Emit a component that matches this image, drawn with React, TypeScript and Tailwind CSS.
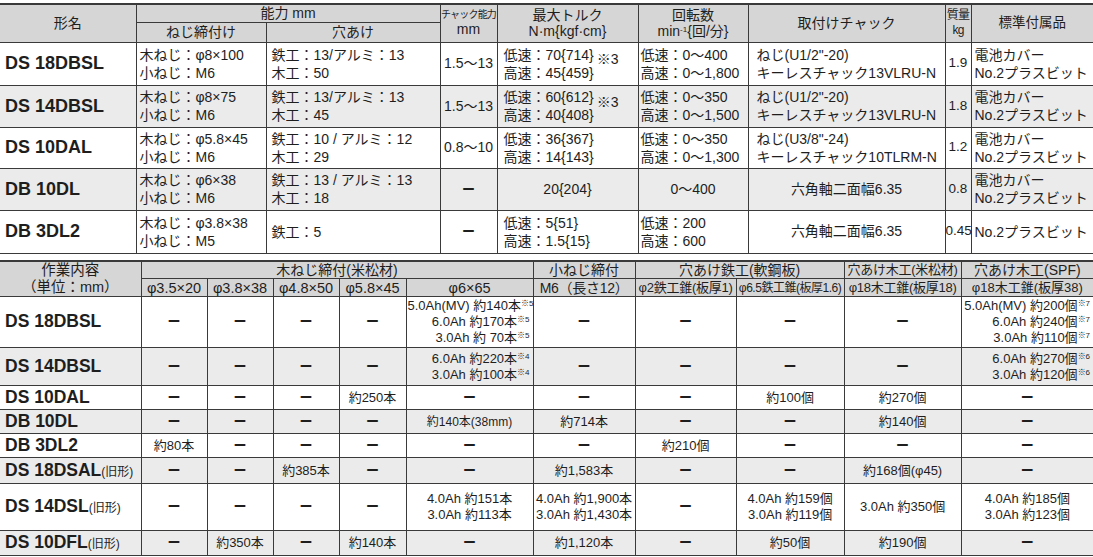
const FONT = "font-['Liberation_Sans','Noto_Sans_CJK_JP',sans-serif]";
const LINE = 'border-l border-b border-[#3a3a3a]';
const HEAD = 'bg-[#d6d6d6] font-normal';
const GRAY = 'bg-[#ebebeb]';

const Dash = () => <span className="font-bold text-[13px]">ー</span>;

type TopRow = {
  name: string;
  screw: string[];
  hole: string[];
  chuck: string;
  torque: string[] | string;
  note?: string;
  rpm: string[] | string;
  mount: string[] | string;
  mass: string;
  acc: string[];
  gray?: boolean;
  h: string;
};

const topRows: TopRow[] = [
  {
    name: 'DS 18DBSL',
    screw: ['木ねじ：φ8×100', '小ねじ：M6'],
    hole: ['鉄工：13/アルミ：13', '木工：50'],
    chuck: '1.5～13',
    torque: ['低速：70{714}', '高速：45{459}'],
    note: '※3',
    rpm: ['低速：0～400', '高速：0～1,800'],
    mount: ['ねじ(U1/2"-20)', 'キーレスチャック13VLRU-N'],
    mass: '1.9',
    acc: ['電池カバー', 'No.2プラスビット'],
    h: 'h-[43px]',
  },
  {
    name: 'DS 14DBSL',
    screw: ['木ねじ：φ8×75', '小ねじ：M6'],
    hole: ['鉄工：13/アルミ：13', '木工：45'],
    chuck: '1.5～13',
    torque: ['低速：60{612}', '高速：40{408}'],
    note: '※3',
    rpm: ['低速：0～350', '高速：0～1,500'],
    mount: ['ねじ(U1/2"-20)', 'キーレスチャック13VLRU-N'],
    mass: '1.8',
    acc: ['電池カバー', 'No.2プラスビット'],
    gray: true,
    h: 'h-[42px]',
  },
  {
    name: 'DS 10DAL',
    screw: ['木ねじ：φ5.8×45', '小ねじ：M6'],
    hole: ['鉄工：10 / アルミ：12', '木工：29'],
    chuck: '0.8～10',
    torque: ['低速：36{367}', '高速：14{143}'],
    rpm: ['低速：0～350', '高速：0～1,300'],
    mount: ['ねじ(U3/8"-24)', 'キーレスチャック10TLRM-N'],
    mass: '1.2',
    acc: ['電池カバー', 'No.2プラスビット'],
    h: 'h-[41px]',
  },
  {
    name: 'DB 10DL',
    screw: ['木ねじ：φ6×38', '小ねじ：M6'],
    hole: ['鉄工：13 / アルミ：13', '木工：18'],
    chuck: '',
    torque: '20{204}',
    rpm: '0～400',
    mount: '六角軸二面幅6.35',
    mass: '0.8',
    acc: ['電池カバー', 'No.2プラスビット'],
    gray: true,
    h: 'h-[42px]',
  },
  {
    name: 'DB 3DL2',
    screw: ['木ねじ：φ3.8×38', '小ねじ：M5'],
    hole: ['鉄工：5'],
    chuck: '',
    torque: ['低速：5{51}', '高速：1.5{15}'],
    rpm: ['低速：200', '高速：600'],
    mount: '六角軸二面幅6.35',
    mass: '0.45',
    acc: ['No.2プラスビット'],
    h: 'h-[43px]',
  },
];

function Lines({ items }: { items: string[] }) {
  return (
    <div className="leading-[18px]">
      {items.map((t) => (
        <div key={t} className="whitespace-nowrap">
          {t}
        </div>
      ))}
    </div>
  );
}

function Multi({ v }: { v: string[] | string }) {
  if (typeof v === 'string') return <div className="text-center whitespace-nowrap">{v}</div>;
  return <Lines items={v} />;
}

function SpecTable() {
  return (
    <table className="w-[1093px] table-fixed border-collapse border-t-2 border-[#3a3a3a] text-[14px]">
      <colgroup>
        <col className="w-[136px]" />
        <col className="w-[130px]" />
        <col className="w-[174px]" />
        <col className="w-[57px]" />
        <col className="w-[141px]" />
        <col className="w-[110px]" />
        <col className="w-[197px]" />
        <col className="w-[26px]" />
        <col className="w-[122px]" />
      </colgroup>
      <thead>
        <tr className="h-[18px]">
          <th rowSpan={2} className={`${HEAD} border-b border-[#3a3a3a] leading-[16px]`}>形名</th>
          <th colSpan={2} className={`${HEAD} ${LINE} leading-[16px]`}>能力 mm</th>
          <th rowSpan={2} className={`${HEAD} ${LINE} px-0`}>
            <div className="text-[10px] leading-[12px] tracking-[-0.08em] whitespace-nowrap">チャック能力</div>
            <div className="leading-[17px]">mm</div>
          </th>
          <th rowSpan={2} className={`${HEAD} ${LINE} leading-[16px]`}>
            最大トルク
            <br />
            N·m{'{kgf·cm}'}
          </th>
          <th rowSpan={2} className={`${HEAD} ${LINE} leading-[16px]`}>
            回転数
            <br />
            min<sup className="text-[8px]">-1</sup>{'{回/分}'}
          </th>
          <th rowSpan={2} className={`${HEAD} ${LINE} leading-[16px]`}>取付けチャック</th>
          <th
            rowSpan={2}
            className={`${HEAD} ${LINE} px-0 text-[12px] leading-[15px] tracking-[-0.06em] whitespace-nowrap`}
          >
            <div>質量</div>
            <div>kg</div>
          </th>
          <th rowSpan={2} className={`${HEAD} ${LINE} text-[13.5px] leading-[16px]`}>標準付属品</th>
        </tr>
        <tr className="h-[20px]">
          <th className={`${HEAD} ${LINE} leading-[17px]`}>ねじ締付け</th>
          <th className={`${HEAD} ${LINE} leading-[17px]`}>穴あけ</th>
        </tr>
      </thead>
      <tbody>
        {topRows.map((r) => (
          <tr key={r.name} className={`${r.h} ${r.gray ? GRAY : 'bg-white'}`}>
            <td className="border-b border-[#3a3a3a] pl-[5px] text-[18px] font-bold whitespace-nowrap">{r.name}</td>
            <td className={`${LINE} px-[3px]`}>
              <Lines items={r.screw} />
            </td>
            <td className={`${LINE} px-[5px]`}>
              <Lines items={r.hole} />
            </td>
            <td className={`${LINE} px-0 text-center`}>{r.chuck ? r.chuck : <Dash />}</td>
            <td className={`${LINE} px-[6px]`}>
              {typeof r.torque === 'string' ? (
                <div className="text-center whitespace-nowrap">{r.torque}</div>
              ) : (
                <div className="flex items-center">
                  <Lines items={r.torque} />
                  {r.note && <span className="relative -top-[4px] ml-[3px] text-[14px]">{r.note}</span>}
                </div>
              )}
            </td>
            <td className={`${LINE} px-[2px]`}>
              <Multi v={r.rpm} />
            </td>
            <td className={`${LINE} px-[8px]`}>
              <Multi v={r.mount} />
            </td>
            <td className={`${LINE} px-0 text-center text-[13.5px]`}>{r.mass}</td>
            <td className={`${LINE} px-[3px]`}>
              <Lines items={r.acc} />
            </td>
          </tr>
        ))}
      </tbody>
    </table>
  );
}

type Ln = [string, string?];
type Cell = string | { lines: Ln[]; right?: boolean; size?: string };

type WorkRow = { name: string; old?: boolean; cells: Cell[]; gray?: boolean; h: string };

const D = '—';

const workRows: WorkRow[] = [
  {
    name: 'DS 18DBSL',
    h: 'h-[51px]',
    cells: [
      D, D, D, D,
      { right: true, lines: [['5.0Ah(MV) 約140本', '※5'], ['6.0Ah 約170本', '※5'], ['3.0Ah 約 70本', '※5']] },
      D, D, D, D,
      { right: true, lines: [['5.0Ah(MV) 約200個', '※7'], ['6.0Ah 約240個', '※7'], ['3.0Ah 約110個', '※7']] },
    ],
  },
  {
    name: 'DS 14DBSL',
    h: 'h-[38px]',
    gray: true,
    cells: [
      D, D, D, D,
      { right: true, lines: [['6.0Ah 約220本', '※4'], ['3.0Ah 約100本', '※4']] },
      D, D, D, D,
      { right: true, lines: [['6.0Ah 約270個', '※6'], ['3.0Ah 約120個', '※6']] },
    ],
  },
  { name: 'DS 10DAL', h: 'h-[24px]', cells: [D, D, D, '約250本', D, D, D, '約100個', '約270個', D] },
  {
    name: 'DB 10DL',
    h: 'h-[24px]',
    gray: true,
    cells: [D, D, D, D, { size: 'text-[12px]', lines: [['約140本(38mm)']] }, '約714本', D, D, '約140個', D],
  },
  { name: 'DB 3DL2', h: 'h-[24px]', cells: ['約80本', D, D, D, D, D, '約210個', D, D, D] },
  {
    name: 'DS 18DSAL',
    old: true,
    h: 'h-[26px]',
    gray: true,
    cells: [D, D, '約385本', D, D, '約1,583本', D, D, '約168個(φ45)', D],
  },
  {
    name: 'DS 14DSL',
    old: true,
    h: 'h-[47px]',
    cells: [
      D, D, D, D,
      { lines: [['4.0Ah 約151本'], ['3.0Ah 約113本']] },
      { lines: [['4.0Ah 約1,900本'], ['3.0Ah 約1,430本']] },
      D,
      { lines: [['4.0Ah 約159個'], ['3.0Ah 約119個']] },
      '3.0Ah 約350個',
      { lines: [['4.0Ah 約185個'], ['3.0Ah 約123個']] },
    ],
  },
  {
    name: 'DS 10DFL',
    old: true,
    h: 'h-[25px]',
    gray: true,
    cells: [D, '約350本', D, '約140本', D, '約1,120本', D, '約50個', '約190個', D],
  },
];

function WorkCell({ c }: { c: Cell }) {
  if (c === D) return <Dash />;
  if (typeof c === 'string') return <span className="whitespace-nowrap">{c}</span>;
  return (
    <div className={`${c.right ? 'text-right pr-[2px]' : 'text-center'} ${c.size ?? ''} leading-[16px]`}>
      {c.lines.map(([t, s]) => (
        <div key={t} className="whitespace-nowrap">
          {t}
          {s && <sup className="text-[8px]">{s}</sup>}
        </div>
      ))}
    </div>
  );
}

const subHeads: { t: string; cls: string }[] = [
  { t: 'φ3.5×20', cls: 'text-[14.5px]' },
  { t: 'φ3.8×38', cls: 'text-[14.5px]' },
  { t: 'φ4.8×50', cls: 'text-[14.5px]' },
  { t: 'φ5.8×45', cls: 'text-[14.5px]' },
  { t: 'φ6×65', cls: 'text-[14.5px]' },
  { t: 'M6（長さ12）', cls: 'text-[14px] tracking-[-0.02em]' },
  { t: 'φ2鉄工錐(板厚1)', cls: 'text-[13px] tracking-[-0.02em]' },
  { t: 'φ6.5鉄工錐(板厚1.6)', cls: 'text-[12px] tracking-[-0.04em]' },
  { t: 'φ18木工錐(板厚18)', cls: 'text-[13px] tracking-[-0.02em]' },
  { t: 'φ18木工錐(板厚38)', cls: 'text-[13px]' },
];

function WorkTable() {
  return (
    <table className="w-[1093px] table-fixed border-collapse border-t-2 border-[#3a3a3a] text-[13px]">
      <colgroup>
        <col className="w-[141px]" />
        <col className="w-[66px]" />
        <col className="w-[66px]" />
        <col className="w-[66px]" />
        <col className="w-[67px]" />
        <col className="w-[127px]" />
        <col className="w-[102px]" />
        <col className="w-[101px]" />
        <col className="w-[108px]" />
        <col className="w-[117px]" />
        <col className="w-[132px]" />
      </colgroup>
      <thead>
        <tr className="h-[18px]">
          <th rowSpan={2} className={`${HEAD} border-b border-[#3a3a3a] text-[14.5px] leading-[17px]`}>
            作業内容
            <br />
            （単位：mm）
          </th>
          <th colSpan={5} className={`${HEAD} ${LINE} text-[14px] leading-[16px]`}>木ねじ締付(米松材)</th>
          <th className={`${HEAD} ${LINE} text-[14px] leading-[16px]`}>小ねじ締付</th>
          <th colSpan={2} className={`${HEAD} ${LINE} text-[14px] leading-[16px]`}>穴あけ鉄工(軟鋼板)</th>
          <th className={`${HEAD} ${LINE} text-[13px] leading-[16px] tracking-[-0.02em] whitespace-nowrap`}>穴あけ木工(米松材)</th>
          <th className={`${HEAD} ${LINE} text-[14px] leading-[16px]`}>穴あけ木工(SPF)</th>
        </tr>
        <tr className="h-[18px]">
          {subHeads.map((s) => (
            <th key={s.t} className={`${HEAD} ${LINE} ${s.cls} px-0 leading-[16px] whitespace-nowrap`}>
              {s.t}
            </th>
          ))}
        </tr>
      </thead>
      <tbody>
        {workRows.map((r) => (
          <tr key={r.name} className={`${r.h} ${r.gray ? GRAY : 'bg-white'}`}>
            <td className="border-b border-[#3a3a3a] pl-[5px] whitespace-nowrap leading-[18px]">
              <span className="text-[17.5px] font-bold">{r.name}</span>
              {r.old && <span className="text-[12px]">(旧形)</span>}
            </td>
            {r.cells.map((c, i) => (
              <td key={i} className={`${LINE} px-[1px] text-center leading-[18px]`}>
                <WorkCell c={c} />
              </td>
            ))}
          </tr>
        ))}
      </tbody>
    </table>
  );
}

export default function App() {
  return (
    <div className={`${FONT} w-[1093px] h-[557px] overflow-hidden bg-white text-[#1e1e1e] pt-[3px]`}>
      <SpecTable />
      <div className="h-[6px]" />
      <WorkTable />
    </div>
  );
}
